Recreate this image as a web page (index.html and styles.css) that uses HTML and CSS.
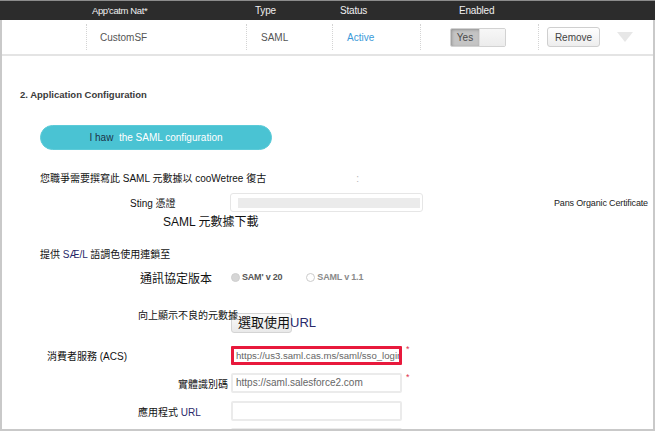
FILE: index.html
```html
<!DOCTYPE html>
<html lang="zh-Hant">
<head>
<meta charset="utf-8">
<title>SAML App Configuration</title>
<link rel="stylesheet" href="styles.css">
</head>
<body>
<div class="page">
  <div class="thead">
    <span></span>
    <span class="th th-name">App'catm Nat*</span>
    <span class="th th-type">Type</span>
    <span class="th th-status">Status</span>
    <span class="th th-enabled">Enabled</span>
    <span></span>
  </div>
  <div class="panel">
    <div class="trow">
      <div class="td"></div>
      <div class="td sep td-name">CustomSF</div>
      <div class="td sep td-type">SAML</div>
      <div class="td sep td-status"><span class="active">Active</span></div>
      <div class="td sep td-enabled">
        <span class="toggle"><span class="toggle-on">Yes</span><span class="toggle-off"></span></span>
      </div>
      <div class="td sep td-actions">
        <button class="btn-remove" type="button">Remove</button>
        <span class="caret"></span>
      </div>
    </div>

    <div class="content">
      <h2 class="title">2. Application Configuration</h2>
      <button class="pill" type="button"><span class="pill-dark">I haw</span>&nbsp; the SAML configuration</button>
      <p class="note">您職爭需要撰寫此 SAML 元數據以 cooWetree 復古<span class="colon">:</span></p>

      <div class="cert-row">
        <span class="cert-label">Sting 憑證</span>
        <span class="cert-input"><span class="cert-fill"></span></span>
        <span class="cert-link">Pans Organic Certificate</span>
      </div>
      <p class="download">SAML 元數據下載</p>

      <p class="provide">提供 <span class="tint">SÆ/L</span> 語調色使用連鎖至</p>

      <div class="proto-row">
        <span class="proto-label">通訊協定版本</span>
        <span class="radio radio-on"></span><span class="opt">SAM' v 20</span>
        <span class="radio radio-off"></span><span class="opt opt-off">SAML v 1.1</span>
      </div>

      <div class="meta-row">
        <span class="meta-label">向上顯示不良的元數據</span>
        <span class="pick">選取使用<span class="tint">URL</span></span>
      </div>

      <div class="frow frow-acs">
        <span class="flabel lab-acs">消費者服務 (ACS)</span>
        <span class="finput finput-error">https://us3.saml.cas.ms/saml/sso_login</span>
        <span class="req">*</span>
      </div>
      <div class="frow frow-gap">
        <span class="flabel lab-entity">實體識別碼</span>
        <span class="finput">https://saml.salesforce2.com</span>
        <span class="req">*</span>
      </div>
      <div class="frow frow-gap">
        <span class="flabel lab-url">應用程式 <span class="tint">URL</span></span>
        <span class="finput"></span>
        <span></span>
      </div>
      <div class="frow frow-last">
        <span class="flabel"></span>
        <span class="finput"></span>
        <span></span>
      </div>
    </div>
  </div>
</div>
</body>
</html>
```
FILE: styles.css
```css
* { box-sizing: border-box; }

body {
  margin: 0;
  background: #ffffff;
  color: #111111;
  font-family: "Liberation Sans", "Noto Sans CJK TC", sans-serif;
}

.page {
  width: 655px;
  height: 431px;
  display: flex;
  flex-direction: column;
  overflow: hidden;
}

/* ---------- table header ---------- */
.thead {
  height: 20px;
  flex: none;
  background: #2c2c2c;
  border-top: 1px solid #8c8c8c;
  display: grid;
  grid-template-columns: 86px 160px 86px 88px 118px 1fr;
  align-items: center;
  color: #efefef;
  font-size: 10px;
  letter-spacing: -0.2px;
}
.th-name { padding-left: 6px; font-size: 9.5px; letter-spacing: -0.4px; }
.th-type { padding-left: 9px; }
.th-status { padding-left: 8px; }
.th-enabled { padding-left: 39px; }

/* ---------- panel ---------- */
.panel {
  flex: 1;
  min-height: 0;
  overflow: hidden;
  border-left: 2px solid #c9c9c9;
  border-right: 2px solid #c9c9c9;
  border-bottom: 2px solid #c9c9c9;
}

.trow {
  height: 36px;
  border-bottom: 2px solid #e4e4e4;
  display: grid;
  grid-template-columns: 84px 160px 86px 88px 118px 1fr;
  align-items: center;
  font-size: 10px;
  color: #555555;
}
.td { height: 26px; display: flex; align-items: center; }
.sep { border-left: 1px dotted #d4d4d4; }
.td-name { padding-left: 13px; }
.td-type { padding-left: 14px; }
.td-status { padding-left: 14px; }
.td-enabled { padding-left: 29px; }
.td-actions { padding-left: 8px; }

.active { color: #3b9ad9; }

.toggle {
  display: flex;
  width: 56px;
  height: 19px;
  border: 1px solid #d2d2d2;
  border-radius: 2px;
  overflow: hidden;
}
.toggle-on {
  width: 28px;
  background: #c4c4c4;
  box-shadow: inset 1px 1px 3px rgba(0,0,0,0.25);
  color: #4a4a4a;
  font-size: 10px;
  display: flex;
  align-items: center;
  justify-content: center;
}
.toggle-off {
  flex: 1;
  background: linear-gradient(#f7f7f7, #ececec);
  border-left: 1px solid #dcdcdc;
}

.btn-remove {
  width: 53px;
  height: 20px;
  padding: 0;
  border: 1px solid #cfcfcf;
  border-radius: 3px;
  background: linear-gradient(#ffffff, #ededed);
  font-family: inherit;
  font-size: 10px;
  color: #444444;
}
.caret {
  margin-left: 17px;
  width: 0;
  height: 0;
  border-left: 8px solid transparent;
  border-right: 8px solid transparent;
  border-top: 10px solid #e7e7e7;
}

/* ---------- content ---------- */
.content {
  display: flex;
  flex-direction: column;
  align-items: flex-start;
  padding-top: 33px;
}

.title {
  margin: 0 0 0 18px;
  font-size: 9.5px;
  line-height: 12px;
  font-weight: bold;
  color: #3a3a3a;
}

.pill {
  margin: 24px 0 0 38px;
  width: 232px;
  height: 25px;
  padding: 0;
  border: 1px solid #5ccbd8;
  border-radius: 13px;
  background: #4ac3d3;
  color: #ffffff;
  font-family: inherit;
  font-size: 10px;
}
.pill-dark { color: #1c3348; }

.note {
  margin: 22px 0 0 38px;
  font-size: 10px;
  line-height: 14px;
  white-space: nowrap;
}
.colon { margin-left: 90px; color: #b5b5b5; }

.cert-row {
  margin-top: 7px;
  height: 19px;
  display: flex;
  align-items: center;
  font-size: 10px;
}
.cert-label { margin-left: 128px; width: 100px; }
.cert-input {
  width: 193px;
  height: 19px;
  border: 1px solid #e6e6e6;
  border-radius: 3px;
  padding: 4px 2px 3px 7px;
}
.cert-fill { display: block; height: 10px; background: #ebebeb; }
.cert-link {
  margin-left: 131px;
  font-size: 9px;
  letter-spacing: -0.15px;
  white-space: nowrap;
  color: #222222;
}

.download {
  margin: 2px 0 0 161px;
  font-size: 12px;
  line-height: 16px;
}

.provide {
  margin: 18px 0 0 38px;
  font-size: 10px;
  line-height: 14px;
}
.tint { color: #2a2a6a; }

.proto-row {
  margin-top: 7px;
  height: 16px;
  display: flex;
  align-items: center;
}
.proto-label { margin-left: 138px; width: 91px; font-size: 12px; }
.radio {
  width: 9px;
  height: 9px;
  border-radius: 50%;
}
.radio-on { background: #d6d6d6; border: 1px solid #cfcfcf; }
.radio-off { margin-left: 24px; background: #ffffff; border: 1px solid #cccccc; }
.opt {
  margin-left: 2px;
  font-size: 9px;
  font-weight: bold;
  color: #555555;
  letter-spacing: -0.2px;
}
.opt-off { color: #8a8a8a; }

.meta-row {
  margin-top: 24px;
  height: 24px;
  display: flex;
  align-items: flex-start;
}
.meta-label {
  position: relative;
  z-index: 1;
  margin-left: 136px;
  width: 93px;
  font-size: 10px;
  line-height: 14px;
  white-space: nowrap;
}
.pick {
  margin-top: 4px;
  width: 61px;
  height: 20px;
  padding-left: 6px;
  border: 1px solid #d4d4d4;
  border-radius: 3px;
  background: linear-gradient(#fafafa, #e9e9e9);
  font-size: 13px;
  line-height: 17px;
  white-space: nowrap;
}

.frow {
  display: grid;
  grid-template-columns: 229px 171px auto;
  align-items: center;
  height: 20px;
}
.frow-acs { margin-top: 12px; }
.frow-gap { margin-top: 8px; }
.frow-last { margin-top: 7px; }
.flabel { font-size: 10px; white-space: nowrap; }
.lab-acs { padding-left: 45px; }
.lab-entity { padding-left: 176px; }
.lab-url { padding-left: 136px; }

.finput {
  height: 20px;
  border: 2px solid #ebebeb;
  border-radius: 2px;
  padding-left: 3px;
  font-size: 10px;
  line-height: 16px;
  color: #666666;
  white-space: nowrap;
  overflow: hidden;
}
.finput-error {
  height: 19px;
  border: 3px solid #e8193c;
  border-radius: 1px;
  padding-left: 2px;
  font-size: 9.6px;
  line-height: 13px;
}
.req {
  align-self: start;
  margin-left: 4px;
  font-size: 9px;
  line-height: 9px;
  color: #e0334d;
}
```
